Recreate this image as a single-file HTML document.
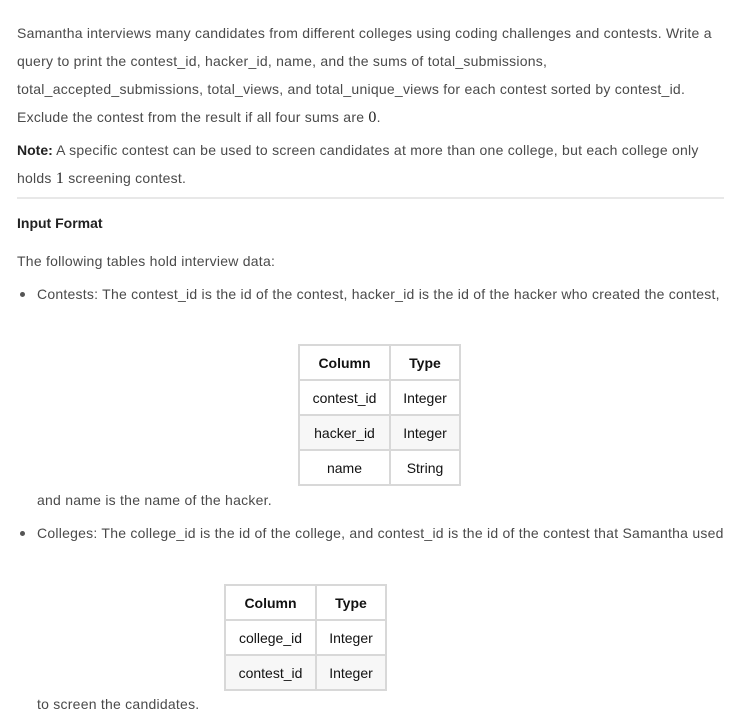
<!DOCTYPE html>
<html><head><meta charset="utf-8"><style>
body{margin:0;background:#fff;width:745px;height:721px;position:relative;overflow:hidden;font-family:"Liberation Sans",sans-serif;color:#4a4a4a;font-size:14px}
.t{position:absolute;white-space:nowrap;line-height:20px;letter-spacing:0.24px}
b{color:#222;letter-spacing:0}
.m{font-family:"Liberation Serif",serif;font-size:16px;color:#222}
table{position:absolute;border-collapse:collapse;font-size:14px;color:#111}
td,th{border:2px solid #d8d8d8;height:33px;padding:0;text-align:center}
th{font-weight:bold}
tr.g td{background:#f7f7f7}
.hr{position:absolute;left:17px;top:197px;width:707px;height:2px;background:#e8e8e8}
.dot{position:absolute;width:5px;height:5px;border-radius:50%;background:#555}
</style></head><body>
<div class="t" style="left:17px;top:23px">Samantha interviews many candidates from different colleges using coding challenges and contests. Write a</div>
<div class="t" style="left:17px;top:51px">query to print the contest_id, hacker_id, name, and the sums of total_submissions,</div>
<div class="t" style="left:17px;top:79px">total_accepted_submissions, total_views, and total_unique_views for each contest sorted by contest_id.</div>
<div class="t" style="left:17px;top:107px">Exclude the contest from the result if all four sums are <span class="m">0</span>.</div>
<div class="t" style="left:17px;top:140px"><b>Note:</b> A specific contest can be used to screen candidates at more than one college, but each college only</div>
<div class="t" style="left:17px;top:168px">holds <span class="m">1</span> screening contest.</div>
<div class="hr"></div>
<div class="t" style="left:17px;top:213px"><b>Input Format</b></div>
<div class="t" style="left:17px;top:251px">The following tables hold interview data:</div>
<div class="dot" style="left:20px;top:292px"></div>
<div class="t" style="left:37px;top:284px">Contests: The contest_id is the id of the contest, hacker_id is the id of the hacker who created the contest,</div>
<table style="left:298px;top:344px;width:163px">
<tr><th style="width:89px">Column</th><th>Type</th></tr>
<tr><td>contest_id</td><td>Integer</td></tr>
<tr class="g"><td>hacker_id</td><td>Integer</td></tr>
<tr><td>name</td><td>String</td></tr>
</table>
<div class="t" style="left:37px;top:490px">and name is the name of the hacker.</div>
<div class="dot" style="left:20px;top:531px"></div>
<div class="t" style="left:37px;top:523px">Colleges: The college_id is the id of the college, and contest_id is the id of the contest that Samantha used</div>
<table style="left:224px;top:584px;width:163px">
<tr><th style="width:89px">Column</th><th>Type</th></tr>
<tr><td>college_id</td><td>Integer</td></tr>
<tr class="g"><td>contest_id</td><td>Integer</td></tr>
</table>
<div class="t" style="left:37px;top:694px">to screen the candidates.</div>
</body></html>
